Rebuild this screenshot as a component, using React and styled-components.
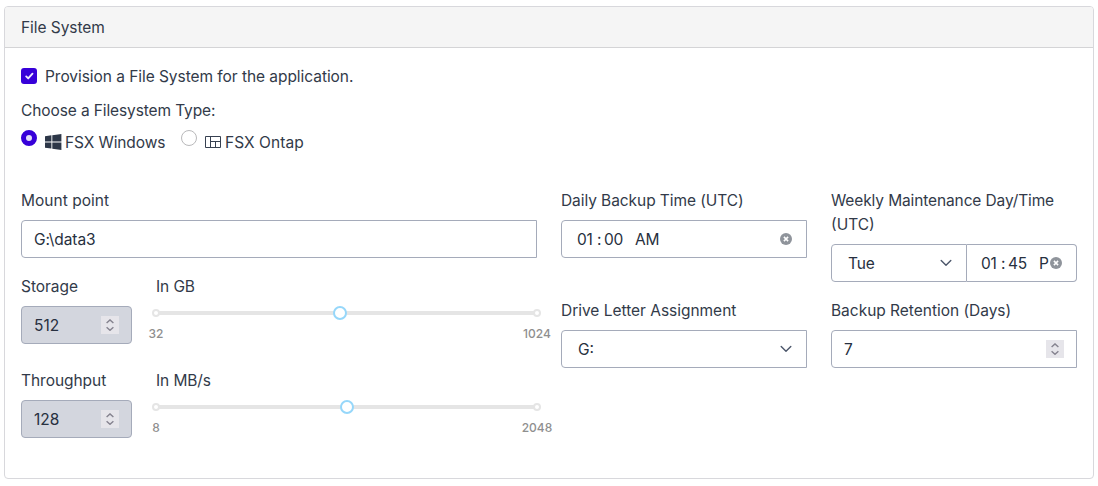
import React from "react";
import styled, { createGlobalStyle } from "styled-components";

const GlobalStyle = createGlobalStyle`
  *, *::before, *::after { box-sizing: border-box; }
  body {
    margin: 0;
    background: #fff;
    color: #323a49;
    font-family: Inter, "Liberation Sans", sans-serif;
    font-size: 15.5px;
    line-height: 24px;
  }
`;

const Text = styled.span`
  letter-spacing: ${(p) => p.$track ?? 0}px;
  white-space: nowrap;
  padding-top: 1px;
  line-height: 24px;
  display: block;
  height: 24px;
`;

const Page = styled.main`
  padding: 6px 4px 7px;
  height: 486px;
`;

const Card = styled.section`
  display: flex;
  flex-direction: column;
  height: 473px;
  width: 1090px;
  border: 1px solid #d8d8dc;
  border-radius: 4px;
  overflow: hidden;
`;

const CardHeader = styled.header`
  height: 41px;
  padding: 8px 16px;
  background: #f5f5f5;
  border-bottom: 1px solid #d4d4d6;
`;

const CardBody = styled.div`
  padding: 16px;
`;

const CheckRow = styled.label`
  display: flex;
  align-items: center;
  gap: 8px;
  height: 24px;
`;

const Checkbox = styled.span`
  display: grid;
  place-items: center;
  width: 16px;
  height: 16px;
  border-radius: 3px;
  background: #3700d9;
`;

const Prompt = styled.div`
  margin-top: 10px;
  height: 24px;
`;

const RadioRow = styled.div`
  display: flex;
  gap: 16px;
  margin-top: 8px;
`;

const RadioOption = styled.label`
  display: flex;
  height: 24px;
  width: ${(p) => p.$width}px;
`;

const Radio = styled.span`
  flex: none;
  width: 16px;
  height: 16px;
  border-radius: 50%;
  margin-right: 8px;
  background: ${(p) => (p.$on ? "#e3dcfa" : "#fff")};
  border: ${(p) => (p.$on ? "5px solid #3700d9" : "1px solid #b9b9bb")};
`;

const IconSlot = styled.span`
  display: flex;
  align-items: center;
  width: 20px;
  flex: none;
`;

const FormGrid = styled.div`
  display: grid;
  grid-template-columns: 516px 246px 246px;
  column-gap: 24px;
  margin-top: 34px;
`;

const Stack = styled.div`
  display: flex;
  flex-direction: column;
`;

const SideGrid = styled.div`
  grid-column: span 2;
  display: grid;
  grid-template-columns: 246px 246px;
  grid-template-rows: 94px 70px;
  gap: 16px 24px;
  align-content: start;
`;

const Field = styled.div`
  display: flex;
  flex-direction: column;
  gap: 8px;
`;

const FieldLabel = styled.div`
  min-height: 24px;
  display: flex;
  flex-direction: column;
`;

const Control = styled.div`
  display: flex;
  align-items: center;
  position: relative;
  height: 38px;
  padding: 0 ${(p) => p.$right ?? 12}px 0 ${(p) => p.$left ?? 12}px;
  border: 1px solid #a5abba;
  border-radius: ${(p) => p.$radius ?? "4px 0 0 4px"};
  background: ${(p) => (p.$disabled ? "#d3d6de" : "#fff")};
  color: #273040;
`;

const Trailing = styled.span`
  display: flex;
  margin-left: auto;
`;

const InputGroup = styled.div`
  display: grid;
  grid-template-columns: 136px 110px;
  & > :last-child { border-left: 0; }
`;

const SpinBox = styled.span`
  display: grid;
  place-items: center;
  width: 18px;
  height: 18px;
  margin-left: auto;
  background: #e6e5ea;
`;

const TimeParts = styled.span`
  display: grid;
  grid-template-columns: 20px 7px 31px auto;
`;

const SliderRow = styled.div`
  display: grid;
  grid-template-columns: 111px 381px;
  column-gap: 24px;
  margin-top: ${(p) => p.$gap}px;
`;

const SliderArea = styled.div`
  height: 38px;
`;

const Rail = styled.div`
  position: relative;
  height: 4px;
  margin-top: 5px;
  background: #e5e5e5;
`;

const Dot = styled.span`
  position: absolute;
  top: -2px;
  left: ${(p) => p.$at};
  width: 8px;
  height: 8px;
  margin-left: -4px;
  border: 2px solid #e5e5e5;
  border-radius: 50%;
  background: #fff;
`;

const Handle = styled.span`
  position: absolute;
  top: -5px;
  width: 14px;
  height: 14px;
  margin-left: -7px;
  border: 2px solid #96d7fa;
  border-radius: 50%;
  background: #fff;
`;

const Marks = styled.div`
  display: flex;
  justify-content: space-between;
  margin-top: 10px;
  font-size: 12px;
  font-weight: 500;
  line-height: 18px;
  color: #8f8f8f;
`;

const Mark = styled.span`
  display: flex;
  justify-content: center;
  width: 0;
`;

const CheckIcon = () => (
  <svg width="16" height="16" viewBox="0 0 16 16" fill="none">
    <path d="M5.2 8.4 7.2 10.4 11.5 5.7" stroke="#eee9ff" strokeWidth="1.9" strokeLinecap="round" strokeLinejoin="round" />
  </svg>
);

const WindowsIcon = () => (
  <svg width="17" height="16" viewBox="0 0 17 16" fill="#2d3748">
    <path d="M0 2.2 6.4 1.3V7.5H0zM7.3 1.2 16.4 0V7.5H7.3zM0 8.5H6.4V14.6L0 13.7zM7.3 8.5H16.4V16L7.3 14.8z" />
  </svg>
);

const OntapIcon = () => (
  <svg width="16" height="12" viewBox="0 0 16 12" fill="none" stroke="#374151">
    <path d="M.5.5H15.5V11.5H.5zM5.5.5V11.5M5.5 5.5H15.5M10.5 5.5V11.5" strokeWidth="1" />
  </svg>
);

const Chevron = () => (
  <svg width="12" height="8" viewBox="0 0 12 8" fill="none">
    <path d="M1.2 1.6 6 6.3 10.8 1.6" stroke="#4b566a" strokeWidth="1.4" strokeLinecap="round" strokeLinejoin="round" />
  </svg>
);

const ClearIcon = () => (
  <svg width="12" height="12" viewBox="0 0 12 12">
    <circle cx="6" cy="6" r="6" fill="#8f949b" />
    <path d="M3.9 3.9 8.1 8.1M8.1 3.9 3.9 8.1" stroke="#fff" strokeWidth="1.5" />
  </svg>
);

const Spinner = () => (
  <SpinBox>
    <svg width="8" height="12" viewBox="0 0 8 12" fill="none" stroke="#85838f" strokeWidth="1.4">
      <path d="M.6 4 4 .9 7.4 4M.6 8.2 4 11.3 7.4 8.2" />
    </svg>
  </SpinBox>
);

const Time = ({ hour, minute, period }) => (
  <TimeParts>
    <Text $track={-0.2}>{hour}</Text>
    <Text>:</Text>
    <Text $track={-0.2}>{minute}</Text>
    <Text $track={-0.3}>{period}</Text>
  </TimeParts>
);

const SliderField = ({ gap, label, value, unit, min, max, percent }) => (
  <SliderRow $gap={gap}>
    <Field>
      <FieldLabel><Text $track={-0.04}>{label}</Text></FieldLabel>
      <Control $disabled $radius="4px">
        <Text>{value}</Text>
        <Spinner />
      </Control>
    </Field>
    <Field>
      <FieldLabel><Text $track={-0.1}>{unit}</Text></FieldLabel>
      <SliderArea>
        <Rail>
          <Dot $at="0%" />
          <Dot $at="100%" />
          <Handle style={{ left: `${percent}%` }} />
        </Rail>
        <Marks>
          <Mark>{min}</Mark>
          <Mark>{max}</Mark>
        </Marks>
      </SliderArea>
    </Field>
  </SliderRow>
);

export default function App() {
  return (
    <>
      <GlobalStyle />
      <Page>
        <Card>
          <CardHeader><Text $track={-0.06}>File System</Text></CardHeader>
          <CardBody>
            <CheckRow>
              <Checkbox><CheckIcon /></Checkbox>
              <Text $track={-0.05}>Provision a File System for the application.</Text>
            </CheckRow>
            <Prompt><Text $track={-0.11}>Choose a Filesystem Type:</Text></Prompt>
            <RadioRow>
              <RadioOption $width={144}>
                <Radio $on />
                <IconSlot><WindowsIcon /></IconSlot>
                <Text $track={-0.1}>FSX Windows</Text>
              </RadioOption>
              <RadioOption $width={130}>
                <Radio />
                <IconSlot><OntapIcon /></IconSlot>
                <Text $track={0.05}>FSX Ontap</Text>
              </RadioOption>
            </RadioRow>
            <FormGrid>
              <Stack>
                <Field>
                  <FieldLabel><Text $track={0.03}>Mount point</Text></FieldLabel>
                  <Control><Text $track={-0.1}>G:\data3</Text></Control>
                </Field>
                <SliderField gap={16} label="Storage" value="512" unit="In GB" min="32" max="1024" percent={48.3} />
                <SliderField gap={24} label="Throughput" value="128" unit="In MB/s" min="8" max="2048" percent={50.1} />
              </Stack>
              <SideGrid>
                <Field>
                  <FieldLabel><Text $track={-0.07}>Daily Backup Time (UTC)</Text></FieldLabel>
                  <Control $left={15} $right={14}>
                    <Time hour="01" minute="00" period="AM" />
                    <Trailing><ClearIcon /></Trailing>
                  </Control>
                </Field>
                <Field>
                  <FieldLabel>
                    <Text $track={-0.12}>Weekly Maintenance Day/Time</Text>
                    <Text>(UTC)</Text>
                  </FieldLabel>
                  <InputGroup>
                    <Control $left={16} $right={14}>
                      <Text $track={-0.2}>Tue</Text>
                      <Trailing><Chevron /></Trailing>
                    </Control>
                    <Control $left={14} $right={14} $radius="0 4px 4px 0">
                      <Time hour="01" minute="45" period="P" />
                      <Trailing><ClearIcon /></Trailing>
                    </Control>
                  </InputGroup>
                </Field>
                <Field>
                  <FieldLabel><Text $track={-0.02}>Drive Letter Assignment</Text></FieldLabel>
                  <Control $left={16} $right={14}>
                    <Text>G:</Text>
                    <Trailing><Chevron /></Trailing>
                  </Control>
                </Field>
                <Field>
                  <FieldLabel><Text $track={-0.02}>Backup Retention (Days)</Text></FieldLabel>
                  <Control>
                    <Text>7</Text>
                    <Spinner />
                  </Control>
                </Field>
              </SideGrid>
            </FormGrid>
          </CardBody>
        </Card>
      </Page>
    </>
  );
}
